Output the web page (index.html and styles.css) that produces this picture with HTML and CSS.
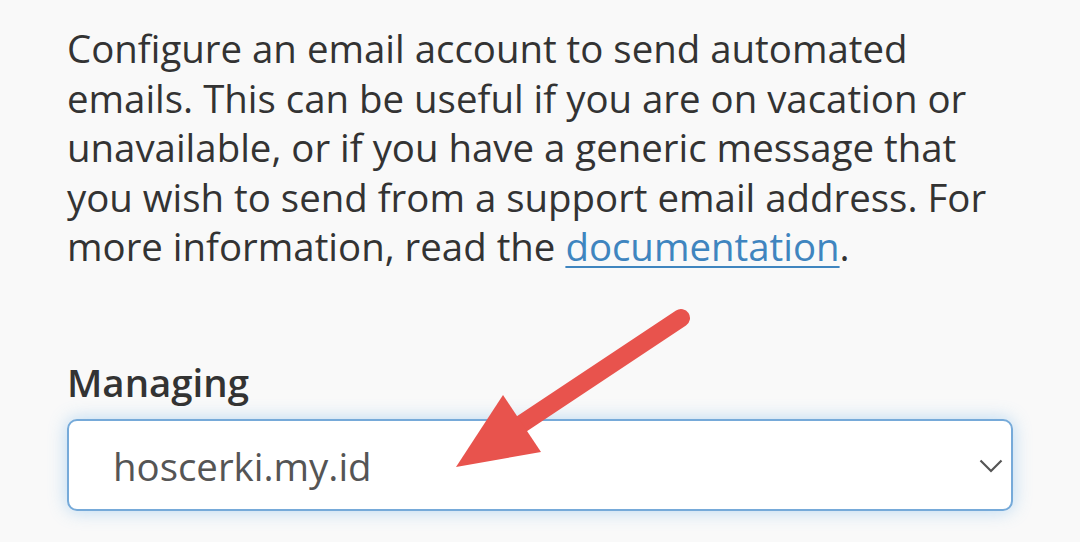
FILE: index.html
```html
<!DOCTYPE html>
<html lang="en">
<head>
<meta charset="utf-8">
<title>Autoresponders</title>
<link rel="stylesheet" href="styles.css">
</head>
<body>
<main class="page">
  <p class="intro">Configure an email account to send automated emails. This can be useful if you are on vacation or unavailable, or if you have a generic message that you wish to send from a support email address. For more information, read the <a class="doc-link" href="#">documentation</a>.</p>
  <div class="field">
    <label class="field-label" for="domain">Managing</label>
    <div class="select" id="domain">
      <span class="select-value">hoscerki.my.id</span>
      <svg class="chevron" viewBox="0 0 24 14" width="24" height="14" aria-hidden="true"><polyline points="1.5,1.5 12,12 22.5,1.5" fill="none" stroke="#555" stroke-width="2.2"/></svg>
    </div>
  </div>
</main>
<svg class="annotation" viewBox="0 0 1080 542" width="1080" height="542" aria-hidden="true">
  <line x1="681" y1="318" x2="520" y2="425" stroke="#e8534d" stroke-width="18" stroke-linecap="round"/>
  <polygon points="456,467 503,395 541,452" fill="#e8534d"/>
</svg>
</body>
</html>
```

FILE: styles.css
```css
html, body {
  margin: 0;
  padding: 0;
}
body {
  background: #f9f9f9;
  font-family: "Open Sans", "Noto Sans", sans-serif;
  color: #333;
  width: 1080px;
  height: 542px;
  overflow: hidden;
  position: relative;
}
.page {
  padding: 24px 0 0 67px;
  width: 946px;
}
.intro {
  margin: 0;
  font-size: 38.4px;
  line-height: 49.5px;
}
.doc-link {
  color: #3f85bf;
  text-decoration: underline;
  text-underline-offset: 5px;
  text-decoration-thickness: 2px;
}
.field {
  margin-top: 86px;
}
.field-label {
  display: block;
  font-size: 38.4px;
  line-height: 49.5px;
  font-weight: 600;
  margin-bottom: 12px;
}
.select {
  box-sizing: border-box;
  height: 92px;
  background: #fff;
  border: 2px solid #76aad9;
  border-radius: 10px;
  box-shadow: 0 0 18px rgba(102, 175, 233, 0.45);
  display: flex;
  align-items: center;
  justify-content: space-between;
  padding: 0 8px 0 44px;
}
.select-value {
  font-size: 38.4px;
  line-height: 49.5px;
  color: #555;
  padding-top: 4px;
}
.chevron {
  display: block;
  margin-top: 2px;
}
.annotation {
  position: absolute;
  top: 0;
  left: 0;
}
```
